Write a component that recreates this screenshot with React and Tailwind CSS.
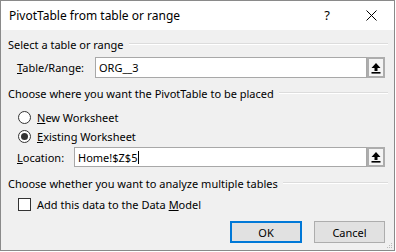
import React from 'react';

const font = { fontFamily: '"Noto Sans", "Open Sans", sans-serif' };

function Heading({ children }) {
  return (
    <div className="h-[16px] flex items-center">
      <span className="whitespace-nowrap">{children}</span>
      <div className="flex-1 ml-[5px] border-t border-[#dcdcdc] border-b border-b-white" />
    </div>
  );
}

function RefButton() {
  return (
    <div className="w-[18px] h-full border-2 border-[#adadad] bg-[#f4f4f4] flex items-center justify-center">
      <svg width="10" height="12" viewBox="0 0 10 12">
        <path d="M5 1 L9.5 6 L6.5 6 L6.5 9 L3.5 9 L3.5 6 L0.5 6 Z" fill="#000" />
        <rect x="0.5" y="10" width="9" height="1.6" fill="#000" />
      </svg>
    </div>
  );
}

function Radio({ checked, children }) {
  return (
    <div className="h-[16px] flex items-center pl-[10px]">
      <div className="w-[13px] h-[13px] rounded-full border border-[#333] bg-white flex items-center justify-center">
        {checked && <div className="w-[7px] h-[7px] rounded-full bg-[#333]" />}
      </div>
      <span className="ml-[6px]">{children}</span>
    </div>
  );
}

export default function App() {
  return (
    <div className="w-[396px] h-[252px] bg-white text-[11px] text-black leading-none" style={font}>
      <div className="w-[395px] h-[251px] border border-[#8a8a8a] bg-[#f0f0f0] flex flex-col">
        <div className="h-[30px] bg-white flex items-center text-[12px]">
          <span className="pl-[8px]">PivotTable from table or range</span>
          <div className="ml-auto flex h-full">
            <div className="w-[42px] flex items-center justify-center text-[13px]">?</div>
            <div className="w-[46px] flex items-center justify-center">
              <svg width="11" height="11" viewBox="0 0 11 11">
                <path d="M0.5 0.5 L10.5 10.5 M10.5 0.5 L0.5 10.5" stroke="#000" strokeWidth="1" />
              </svg>
            </div>
          </div>
        </div>

        <div className="flex flex-col pl-[7px] pr-[6px]">
          <div className="mt-[6px]">
            <Heading>Select a table or range</Heading>
          </div>

          <div className="mt-[5px] h-[21px] flex items-center pr-[3px]">
            <span className="w-[87px] pl-[9px]">
              <span className="underline">T</span>able/Range:
            </span>
            <div className="flex-1 h-full bg-white border border-[#a8a8a8] flex items-center pl-[3px]">ORG__3</div>
            <RefButton />
          </div>

          <div className="mt-[7px]">
            <Heading>Choose where you want the PivotTable to be placed</Heading>
          </div>

          <div className="mt-[8px]">
            <Radio>
              <span className="underline">N</span>ew Worksheet
            </Radio>
          </div>
          <div className="mt-[3px]">
            <Radio checked>
              <span className="underline">E</span>xisting Worksheet
            </Radio>
          </div>

          <div className="mt-[3px] h-[20px] flex items-center pr-[3px]">
            <span className="w-[66px] pl-[9px]">
              <span className="underline">L</span>ocation:
            </span>
            <div className="flex-1 h-full bg-white border border-[#a8a8a8] flex items-center pl-[3px]">
              Home!$Z$5<span className="w-px h-[13px] bg-black ml-px" />
            </div>
            <RefButton />
          </div>

          <div className="mt-[8px]">
            <Heading>Choose whether you want to analyze multiple tables</Heading>
          </div>

          <div className="mt-[5px] h-[16px] flex items-center pl-[10px]">
            <div className="w-[13px] h-[13px] border border-[#333] bg-white" />
            <span className="ml-[6px]">
              Add this data to the Data <span className="underline">M</span>odel
            </span>
          </div>

          <div className="mt-[9px] h-[22px] flex justify-end gap-[12px] pr-[3px]">
            <button className="w-[72px] h-full border-2 border-[#0078d7] bg-[#e1e1e1]">OK</button>
            <button className="w-[71px] h-full border border-[#adadad] bg-[#e1e1e1]">Cancel</button>
          </div>
        </div>

        <div className="mt-auto flex justify-end pr-[1px] pb-[1px]">
          <svg width="6" height="6" viewBox="0 0 6 6">
            <rect x="4" y="0" width="1" height="1" fill="#bbb" />
            <rect x="2" y="2" width="1" height="1" fill="#bbb" />
            <rect x="4" y="2" width="1" height="1" fill="#bbb" />
            <rect x="0" y="4" width="1" height="1" fill="#bbb" />
            <rect x="2" y="4" width="1" height="1" fill="#bbb" />
            <rect x="4" y="4" width="1" height="1" fill="#bbb" />
          </svg>
        </div>
      </div>
    </div>
  );
}
